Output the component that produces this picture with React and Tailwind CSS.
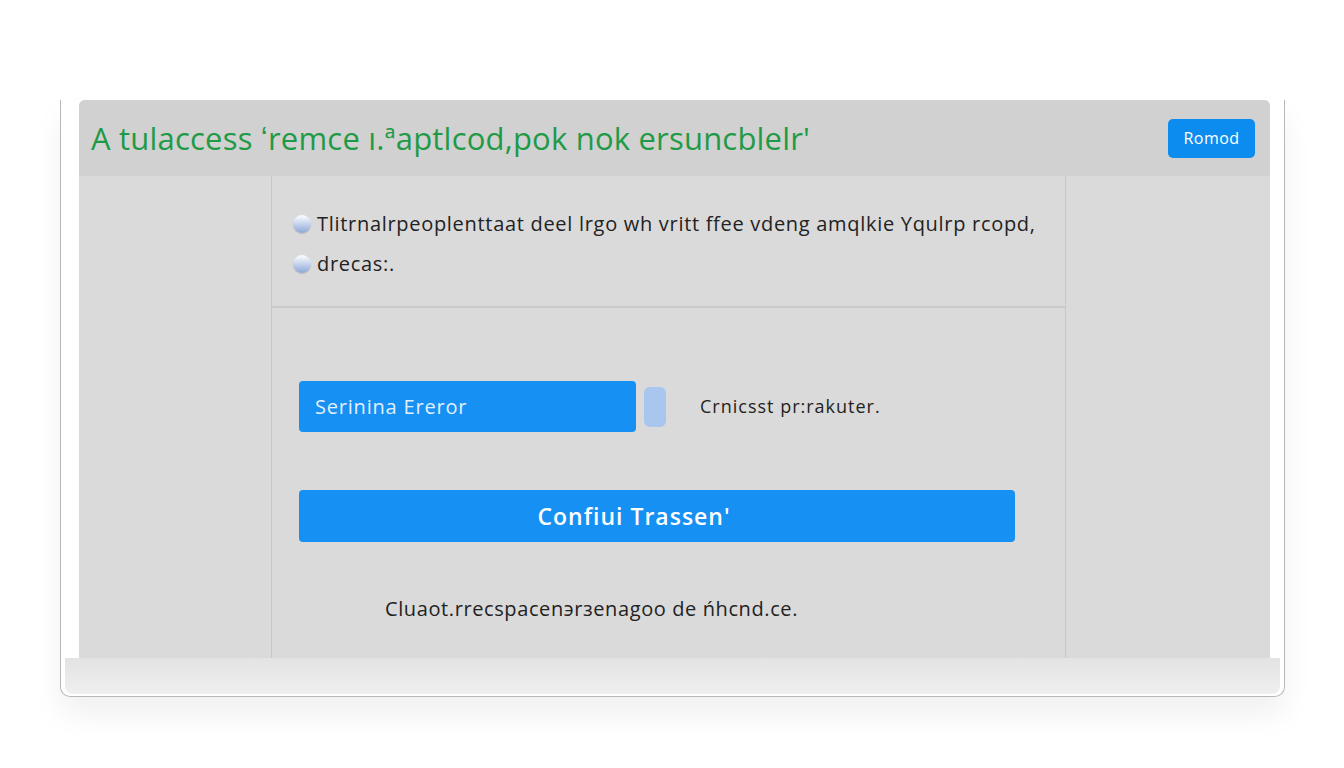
import React from 'react'

const font = { fontFamily: '"Open Sans", "Liberation Sans", sans-serif' }

function Bullet() {
  return (
    <span className="w-[18px] h-[18px] rounded-full bg-gradient-to-b from-white to-[#8ea6d8] shadow-[0_1px_1px_rgba(0,0,0,0.15)] shrink-0" />
  )
}

export default function App() {
  return (
    <div className="w-[1344px] h-[768px] bg-white overflow-hidden" style={font}>
      <div className="pt-[100px] pl-[60px]">
        <div className="w-[1225px] h-[597px] border-x border-b border-[#b8b8b8] rounded-b-[10px] shadow-[0_18px_30px_rgba(0,0,0,0.06)] flex flex-col">
          {/* Panel */}
          <div className="ml-[18px] mr-[14px] h-[558px] flex flex-col bg-[#dadada] rounded-t-[6px]">
            {/* Header */}
            <div className="h-[76px] bg-[#d1d1d1] rounded-t-[6px] flex items-center justify-between pl-[12px] pr-[15px]">
              <h1 className="text-[31px] text-[#1f9a46] tracking-[0.2px] leading-none">
                A tulaccess ʻremce ı.ªaptlcod,pok nok ersuncblelr'
              </h1>
              <button className="w-[87px] h-[39px] rounded-[5px] bg-[#0d8cf0] text-white text-[16px] tracking-[0.5px]">
                Romod
              </button>
            </div>

            {/* Columns */}
            <div className="flex-1 flex">
              <div className="w-[193px] border-r border-[#c8c8c8]" />
              <div className="w-[794px] border-r border-[#c8c8c8] flex flex-col">
                <div className="h-[132px] border-b-2 border-[#cbcbcb] pl-[21px] pt-[36px] flex flex-col gap-[17px] text-[20px] text-[#222] tracking-[0.7px]">
                  <div className="flex items-center gap-[6px] leading-[23px]">
                    <Bullet />
                    <span>Tlitrnalrpeoplenttaat deel lrgo wh vritt ffee vdeng amqlkie Yqulrp rcopd,</span>
                  </div>
                  <div className="flex items-center gap-[6px] leading-[23px]">
                    <Bullet />
                    <span>drecas:.</span>
                  </div>
                </div>

                <div className="flex-1 pl-[27px] pt-[73px]">
                  <div className="flex items-center">
                    <div className="w-[337px] h-[51px] rounded-[4px] bg-[#1690f3] flex items-center pl-[16px] text-[20px] text-[#e2efff] tracking-[0.8px]">
                      Serinina Ereror
                    </div>
                    <div className="ml-[8px] w-[22px] h-[40px] rounded-[6px] bg-[#a8c6ee]" />
                    <div className="ml-[34px] text-[18px] text-[#222] tracking-[1px]">
                      Crnicsst pr:rakuter.
                    </div>
                  </div>

                  <button className="mt-[58px] w-[716px] h-[52px] pr-[46px] rounded-[4px] bg-[#1690f3] text-white text-[23px] font-semibold tracking-[1px]">
                    Confiui Trassen'
                  </button>

                  <div className="mt-[52px] pl-[86px] text-[20px] text-[#222] tracking-[0.6px]">
                    Cluaot.rrecspacenэrзenagoo de ńhcnd.ce.
                  </div>
                </div>
              </div>
              <div className="flex-1" />
            </div>
          </div>
          {/* Bottom strip */}
          <div className="flex-1 mx-[4px] mb-[2px] rounded-b-[8px] bg-gradient-to-b from-[#e3e3e3] to-[#efefef]" />
        </div>
      </div>
    </div>
  )
}
